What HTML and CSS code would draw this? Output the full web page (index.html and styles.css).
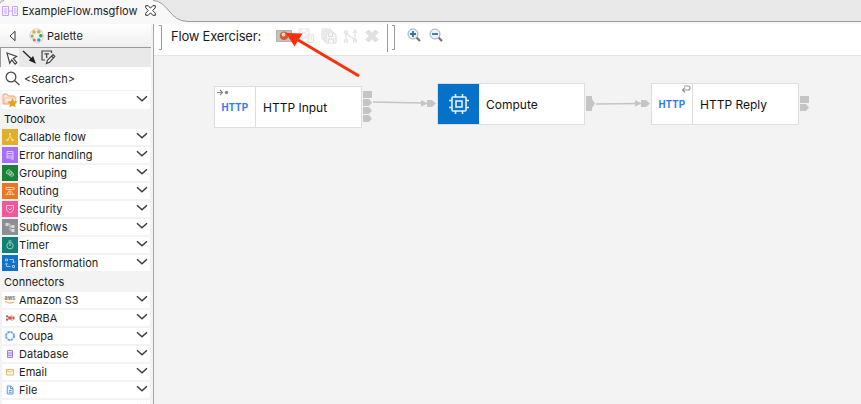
FILE: index.html
```html
<!DOCTYPE html>
<html lang="en">
<head>
<meta charset="utf-8">
<title>ExampleFlow.msgflow</title>
<link rel="stylesheet" href="styles.css">
</head>
<body>
<svg class="defs" width="0" height="0"><defs>
<symbol id="chev" viewBox="0 0 12 8"><path d="M1 1.300 6 5.800 11 1.300" fill="none" stroke="#3c3c3c" stroke-width="1.500"/></symbol>
</defs></svg>
<div class="app">
  <header class="tabs">
    <svg class="tab-shape" width="861" height="24" viewBox="0 0 861 24"><path d="M0 24V3Q1 0 4 0H153C168 0 169 21.500 188 21.500H861V24Z" fill="#f8f8f8"/><path d="M0 3Q1 .5 4 .5M153 .5C168 .5 169 21.500 188 21.500H861" fill="none" stroke="#9b9b9b"/></svg>
    <div class="tab">
      <svg width="17" height="12" viewBox="0 0 17 12" fill="none" stroke="#c4a2fb"><path d="M.5 1.500h6v9h-6zM10.500 1.500h5v9h-5zM6.500 6h4M2 4h3M2 6h3M2 8h3M12 4h2.500M12 6h2.500M12 8h2.500"/></svg>
      <span class="tab-name">ExampleFlow.msgflow</span>
      <svg width="11" height="11" viewBox="0 0 11 11" fill="#fff" stroke="#333"><path d="M.7.7h2.500l2.300 2.500L7.800.7h2.500v2.100L7.700 5.500l2.600 2.700v2.100H7.800L5.500 7.800 3.200 10.300H.7V8.200l2.600-2.700L.7 2.800z"/></svg>
    </div>
  </header>
  <div class="body">
    <aside class="palette">
      <div class="palette-head">
        <svg class="collapse" width="7" height="12" viewBox="0 0 7 12"><path d="M6 1.300v9.400L1 6z" fill="#fff" stroke="#333"/></svg>
        <svg width="15" height="16" viewBox="0 0 15 16"><path d="M7.500.8C12 .8 14.300 4 14.300 8S12 15 7.500 15C6 15 6.500 12 4.500 11S.7 10.500.7 8 3 .8 7.500.8" fill="#eef1f5" stroke="#cbd3dd"/><circle cx="5" cy="4" r="1.800" fill="#e8ad29"/><circle cx="9.800" cy="3.800" r="1.800" fill="#dba633"/><circle cx="11.800" cy="7.700" r="1.800" fill="#42a543"/><circle cx="9.800" cy="12" r="1.800" fill="#3e94dc"/><circle cx="5.200" cy="12" r="1.500" fill="#e86a4b"/><circle cx="3.200" cy="8" r="1.500" fill="#78b94d"/></svg>
        <span>Palette</span>
      </div>
      <div class="tools">
        <span class="tool selected"><svg width="12" height="13" viewBox="0 0 12 13"><path d="m1 1 9.700 3.400-3.400 2 3.500 4.200-1.700 1.500-3.400-4.200-2 3.300z" fill="#fff" stroke="#444" stroke-width="1.200"/></svg></span>
        <svg width="15" height="15" viewBox="0 0 15 15"><path d="m1 1 9 8.500" stroke="#222" stroke-width="1.300"/><path d="m14 13.700-7.200-3.300 4.300-4.300z" fill="#222"/></svg>
        <svg class="note" width="15" height="15" viewBox="0 0 15 15" fill="none" stroke="#444" stroke-width="1.200"><path d="M10.500 3V1H1v9h3M3.500 3.800h4.500M5.700 4v4M5.500 13.500l1-3.300 5.500-5.700 1.800 1.800-5.200 6zM10.500 6l1.800 1.800"/></svg>
      </div>
      <div class="search"><svg width="15" height="15" viewBox="0 0 15 15" fill="none" stroke="#444" stroke-width="1.200"><circle cx="6" cy="6" r="4.900"/><path d="m9.500 9.500 5 4.500"/></svg><span>&lt;Search&gt;</span></div>
      <div class="row fav"><svg class="ico" viewBox="0 0 16 16"><path d="M1 12V3q0-1 1-1h3l1.500 2H12q1 0 1 1v7z" fill="#fde6d9" stroke="#e9a07b"/><path d="M3 6h11l-1 5H2z" fill="#ffeadd" stroke="#efb293" stroke-width=".7"/><path d="m10.500 6 1.500 3.200 3.600.4-2.700 2.500.7 3.500-3.100-1.800-3.200 1.800.7-3.500-2.600-2.500 3.600-.4z" fill="#e4a11b"/></svg><span>Favorites</span><svg class="chev"><use href="#chev"/></svg></div>
      <div class="section">Toolbox</div>
      <div class="row"><svg class="ico" viewBox="0 0 16 16"><path fill="#e0b02a" d="M0 0h16v16H0z"/><path d="M8 4v3.500L5.500 11M8 7.500l2.500 3.500" stroke="#f7df9d" fill="none"/><path d="M7 4h2v2H7zM4.500 10h2v2h-2zM9.500 10h2v2h-2z" fill="#f7df9d"/></svg><span>Callable flow</span><svg class="chev"><use href="#chev"/></svg></div>
      <div class="row"><svg class="ico" viewBox="0 0 16 16"><path fill="#a66efa" d="M0 0h16v16H0z"/><path d="M5 4.500h6v6.500H5zM5 6.500h6M5 9h6M9 12h3" stroke="#dfc8ff" fill="none"/></svg><span>Error handling</span><svg class="chev"><use href="#chev"/></svg></div>
      <div class="row"><svg class="ico" viewBox="0 0 16 16"><path fill="#1b8038" d="M0 0h16v16H0z"/><path d="m4.500 6.500 2-2 3 2v3h-2l-3-1zM7 7.500l2-1 2.500 2v2l-2 1-2.500-1.500z" stroke="#91c69c" fill="#4b9b60"/></svg><span>Grouping</span><svg class="chev"><use href="#chev"/></svg></div>
      <div class="row"><svg class="ico" viewBox="0 0 16 16"><path fill="#ed7624" d="M0 0h16v16H0z"/><path d="M4 4.500h8v2H4zM8 7v4M7 8l-2 3M9 8l2 3M3.500 11.500h3M9.500 11.500h3M7 11.500h2" stroke="#ffd2ac" fill="none"/></svg><span>Routing</span><svg class="chev"><use href="#chev"/></svg></div>
      <div class="row"><svg class="ico" viewBox="0 0 16 16"><path fill="#f1579c" d="M0 0h16v16H0z"/><path d="M4.500 4.500h7V8q0 2.500-3.500 4Q4.500 10.500 4.500 8zM6.500 7.500 8 9l2-2.500" stroke="#ffc0dc" fill="none"/></svg><span>Security</span><svg class="chev"><use href="#chev"/></svg></div>
      <div class="row"><svg class="ico" viewBox="0 0 16 16"><path fill="#8c8f93" d="M0 0h16v16H0z"/><path d="M4 5h4v6h3M8 7.500h3" stroke="#c9cccf" fill="none"/><path d="M3.500 4h3v3h-3zM9.500 6h3v3h-3zM9.500 10h3v3h-3z" fill="#d7d9db"/></svg><span>Subflows</span><svg class="chev"><use href="#chev"/></svg></div>
      <div class="row"><svg class="ico" viewBox="0 0 16 16"><path fill="#108075" d="M0 0h16v16H0z"/><circle cx="8" cy="8.700" r="3.200" stroke="#9bccb8" fill="none"/><path d="M6.500 4h3M8 6.500V9" stroke="#b9d8c8"/></svg><span>Timer</span><svg class="chev"><use href="#chev"/></svg></div>
      <div class="row"><svg class="ico" viewBox="0 0 16 16"><path fill="#126fca" d="M0 0h16v16H0z"/><path d="M7.500 4.500h4v3M8.500 11.500h-4v-3M10 6.500l1.500 1.500L13 6.500M6 9.500 4.500 8 3 9.500M3.500 4h2v2h-2zM10.500 10.500h2v2h-2z" stroke="#9dcbf7" fill="none"/></svg><span>Transformation</span><svg class="chev"><use href="#chev"/></svg></div>
      <div class="section connectors">Connectors</div>
      <div class="row"><svg class="ico" viewBox="0 0 16 16"><text class="aws" x="2.500" y="8">aws</text><path d="M3 9.500q5 3 9.500.5" fill="none" stroke="#eda65f"/></svg><span>Amazon S3</span><svg class="chev"><use href="#chev"/></svg></div>
      <div class="row"><svg class="ico" viewBox="0 0 16 16"><path d="m4.500 5 6 6M4.500 11l6-6M4 8h8" stroke="#888" stroke-width=".8"/><path d="M6.500 6.500h3v3h-3zM10.500 6.500h2v3h-2z" fill="#e54832"/><path d="M4 5.500h2V7H4zM4 9h2v1.500H4z" fill="#c55a4d"/></svg><span>CORBA</span><svg class="chev"><use href="#chev"/></svg></div>
      <div class="row"><svg class="ico" viewBox="0 0 16 16"><circle cx="8" cy="8" r="4" fill="none" stroke="#64a2f5" stroke-width="2" stroke-dasharray="2.400 .74"/></svg><span>Coupa</span><svg class="chev"><use href="#chev"/></svg></div>
      <div class="row"><svg class="ico" viewBox="0 0 16 16"><path d="M5.500 4.500h5v7h-5zM5.500 7h5M5.500 9.300h5" fill="#e9ddfd" stroke="#a779e5"/></svg><span>Database</span><svg class="chev"><use href="#chev"/></svg></div>
      <div class="row"><svg class="ico" viewBox="0 0 16 16"><path d="M4.500 5.500h7v5.500h-7zM4.500 6 8 8.300 11.500 6" fill="#fff8e9" stroke="#e9b967"/></svg><span>Email</span><svg class="chev"><use href="#chev"/></svg></div>
      <div class="row"><svg class="ico" viewBox="0 0 16 16"><path d="M5.300 4h3.500l2.200 2.200V12H5.300zM8.500 4v2.500H11M7 8.500h2.500M7 10.300h2.500" fill="#e4f0ff" stroke="#5b99e5"/></svg><span>File</span><svg class="chev"><use href="#chev"/></svg></div>
      <div class="row"><svg class="chev"><use href="#chev"/></svg></div>
    </aside>
    <main class="editor">
      <div class="toolbar">
        <svg width="5" height="28" viewBox="0 0 5 28"><path d="M1 1.500h2.500v24H1" fill="none" stroke="#999"/></svg>
        <span class="label">Flow Exerciser:</span>
        <div class="actions">
          <svg width="16" height="14" viewBox="0 0 16 14"><path d="M.5 1.500h15v11H.5z" fill="#c2c2c2" stroke="#b0b0b0"/><circle cx="8" cy="6.800" r="4.300" fill="#d8582f"/><circle cx="7.500" cy="5.500" r="1.900" fill="#ffd6bd"/></svg>
          <svg width="17" height="16" viewBox="0 0 17 16" fill="#fafafa" stroke="#e4e4e4"><path d="M1 1h10v8H1zM1 1l5 4 5-4M1 9l4-4M11 9 7 5M5 10h5v4H5zM10.500 6.500h5v8h-5zM12 9h2M12 11h2"/></svg>
          <svg width="16" height="16" viewBox="0 0 16 16" fill="#f7f7f7" stroke="#dcdcdc"><path d="M1 1h8l2 2v8H1z"/><path d="M3 3h8l2 2v8H3z"/><path d="M5 5h8l2 2v8H5z"/><path d="M7.500 5v3.500h4V5M7.500 15v-4h5v4"/></svg>
          <svg width="16" height="16" viewBox="0 0 16 16" fill="none" stroke="#e2e2e2" stroke-width="1.200"><path d="M3 12V5l9 7V4M1.500 3h3v2h-3zM1.500 12h3v2h-3zM10.500 12h3v2h-3zM10 5l2-3 2 3"/></svg>
          <svg width="14" height="14" viewBox="0 0 14 14"><path d="m1 3.500 2.500-2.500L7 4.500 10.500 1 13 3.500 9.500 7l3.500 3.500-2.500 2.500L7 9.500 3.500 13 1 10.500 4.500 7z" fill="#e2e2e2" stroke="#dadada"/></svg>
        </div>
        <i class="divider"></i>
        <svg width="5" height="28" viewBox="0 0 5 28"><path d="M1 1.500h2.500v24H1" fill="none" stroke="#999"/></svg>
        <div class="zooms">
          <svg width="14" height="14" viewBox="0 0 14 14"><path d="m9.500 9.500 3.500 3.500" stroke="#826c60" stroke-width="2.200"/><circle cx="6" cy="6" r="5" fill="#edf5fc" stroke="#9baab7"/><path d="M3 6h6M6 3v6" stroke="#326db5" stroke-width="1.800"/></svg>
          <svg width="14" height="14" viewBox="0 0 14 14"><path d="m9.500 9.500 3.500 3.500" stroke="#826c60" stroke-width="2.200"/><circle cx="6" cy="6" r="5" fill="#edf5fc" stroke="#9baab7"/><path d="M3 6h6" stroke="#326db5" stroke-width="1.800"/></svg>
        </div>
      </div>
      <div class="canvas"></div>
    </main>
  </div>
  <svg class="wires" width="861" height="404" viewBox="0 0 861 404">
    <g fill="#c5c5c5"><path d="M363 91h9v7h-9zM363 99h6l3 3.500-3 3.500h-6zM363 107h6l3 3.500-3 3.500h-6zM363 115h6l3 3.500-3 3.500h-6zM427 100h5l4 3.500-4 3.500h-5zM421 100l7 3.500-7 3zM586 96h6v3l3 4.500-3 4.500v3h-6zM641 100h5l4 3.500-4 3.500h-5zM635 100l7 3.500-7 3zM800 96h9v7h-9zM800 104h6l3 3.500-3 3.500h-6z"/></g>
    <path d="m373 102 50 1M596 104l41-.5" stroke="#c5c5c5" stroke-width="1.500"/>
  </svg>
  <div class="node input"><div class="badge"><b class="http">HTTP</b><svg class="mark in" width="12" height="7" viewBox="0 0 12 7"><path d="M0 3.500h5M3 1l2.500 2.500L3 6" fill="none" stroke="#888" stroke-width="1.200"/><circle cx="9.500" cy="3.500" r="1.700" fill="#888"/></svg></div><span>HTTP Input</span></div>
  <div class="node compute"><div class="badge"><svg width="22" height="22" viewBox="0 0 22 22" fill="none" stroke="#e8f3ff" stroke-width="1.600"><rect x="4" y="4" width="14" height="14" rx="1"/><path d="M8 8h6v6H8zM7.500 4V1M14.500 4V1M7.500 21v-3M14.500 21v-3M4 7.500H1M4 14.500H1M21 7.500h-3M21 14.500h-3"/></svg></div><span>Compute</span></div>
  <div class="node reply"><div class="badge"><b class="http">HTTP</b><svg class="mark out" width="10" height="8" viewBox="0 0 10 8"><path d="M3 1h4q2 0 2 2t-2 2H1.500M4 2.500 1.500 5 4 7.500" fill="none" stroke="#999" stroke-width="1.200"/></svg></div><span>HTTP Reply</span></div>
  <svg class="arrow" width="90" height="52" viewBox="0 0 90 52"><path d="m12 7 61 36" stroke="#fa300b" stroke-width="3"/><path d="M0 0 16.500.5 8.500 13.500z" fill="#fa300b"/></svg>
</div>
</body>
</html>
```
FILE: styles.css
```css
* { box-sizing: border-box; }
body { margin: 0; font-family: Inter, sans-serif; font-size: 11px; color: #1c1c1c; }
svg { display: block; flex: none; }
.defs { position: absolute; }
.app { position: relative; width: 861px; height: 404px; overflow: hidden; display: flex; flex-direction: column; background: #f3f3f3; }
.tabs { position: relative; height: 24px; flex: none; background: #e9e9e9; }
.tab-shape { position: absolute; inset: 0; }
.tab { position: relative; display: flex; align-items: center; height: 21px; padding-left: 2px; }
.tab-name { width: 115px; margin: 1px 8px 0 3px; letter-spacing: 0; white-space: nowrap; }
.body { display: flex; flex: 1; min-height: 0; }
.palette { width: 154px; flex: none; overflow: hidden; background: #f3f3f3; border-right: 1px solid #a6a6a6; padding-right: 2px; }
.palette-head { height: 24px; display: flex; align-items: center; padding-left: 9px; background: linear-gradient(#fff, #efefef); border-bottom: 1px solid #999; letter-spacing: .05px; }
.collapse { margin-right: 13px; }
.palette-head span { margin-left: 3px; }
.tools { height: 19px; display: flex; align-items: center; background: #e9e9e9; gap: 3px; }
.selected { width: 19px; height: 19px; padding: 4px 0 0 5px; background: #f5f5f5; border: solid #999; border-width: 0 0 0 1px; }
.note { margin-left: 1px; }
.search { height: 23px; background: #fff; display: flex; align-items: center; padding-left: 5px; gap: 4px; letter-spacing: -.02px; }
.row { height: 18px; border: solid #f3f3f3; border-width: 1px 1px 1px 2px; background: #fff; display: flex; align-items: center; letter-spacing: .03px; }
.row span { margin-left: 1px; white-space: nowrap; }
.ico { width: 16px; height: 16px; }
.chev { width: 12px; height: 8px; margin: -3px 2px 0 auto; }
.fav { height: 20px; }
.section { height: 18px; line-height: 18px; padding-left: 4px; }
.connectors { height: 19px; line-height: 20px; }
.aws { font: bold 5.500px Inter, sans-serif; fill: #777; letter-spacing: 0; }
.editor { flex: 1; display: flex; flex-direction: column; }
.toolbar { height: 31px; flex: none; background: #fff; display: flex; align-items: center; padding: 0 0 3px 4px; }
.label { font-size: 13px; letter-spacing: -.22px; width: 92px; margin: -5px 13px 0 8px; white-space: nowrap; }
.actions { display: flex; align-items: center; gap: 6px; margin-top: -5px; }
.divider { width: 1px; height: 28px; background: #999; margin: 0 3px 0 8px; }
.zooms { display: flex; gap: 8px; margin: -6px 0 0 11px; }
.canvas { flex: 1; background: #f3f3f3; border-top: 1px solid #e5e5e5; }
.wires, .arrow { position: absolute; left: 0; top: 0; }
.arrow { left: 286px; top: 33px; }
.node { position: absolute; width: 148px; height: 42px; display: flex; align-items: center; background: #fff; border: 1px solid #dedede; font-size: 12px; color: #111; }
.node > span { margin-left: 7px; white-space: nowrap; }
.badge { position: relative; width: 41px; height: 40px; display: flex; align-items: center; justify-content: center; border-right: 1px solid #dedede; }
.input { left: 214px; top: 86px; }
.compute { left: 437px; top: 83px; }
.compute .badge { background: #0571c8; border: 0; }
.reply { left: 651px; top: 83px; }
.http { font: bold 10px Roboto, sans-serif; letter-spacing: .25px; color: #2f7bf6; }
.mark { position: absolute; }
.in { left: 2px; top: 2px; }
.out { right: 1px; top: 1px; }
```
